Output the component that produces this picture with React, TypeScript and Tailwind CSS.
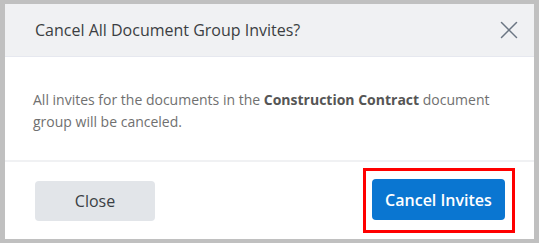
import { X } from 'lucide-react'

export default function App() {
  return (
    <div className="w-[539px] h-[243px] bg-[#c0c0c0] pt-[4px] pb-[4px] px-[5px] font-['Open_Sans',sans-serif]">
      <div className="flex flex-col h-full bg-white">
        <div className="flex items-center justify-between h-[53px] bg-[#f0f1f3] border-b border-[#e6e8ef] pl-[30px] pr-[10px]">
          <h2 className="text-[16px] text-[#3b3e42]">Cancel All Document Group Invites?</h2>
          <button className="text-[#6b7683]" aria-label="Close">
            <X className="w-[30px] h-[30px]" strokeWidth={1.2} />
          </button>
        </div>
        <div className="pt-[32px] pb-[27px] pl-[28px] pr-[40px] border-b-2 border-[#f0f1f3]">
          <p className="text-[14px] leading-[22px] text-[#707070]">
            All invites for the documents in the <span className="font-bold text-[#555]">Construction Contract</span> document group will be canceled.
          </p>
        </div>
        <div className="flex flex-1 items-center justify-between pl-[30px] pr-[19px]">
          <button className="w-[120px] h-[40px] rounded-[4px] bg-[#e2e5e9] text-[16px] text-[#3a3f44]">
            Close
          </button>
          <div className="border-[3px] border-[#ff0000] pt-[8px] pb-[10px] pl-[6px] pr-[7px]">
            <button className="w-[133px] h-[41px] rounded-[4px] bg-[#0a76d1] text-[16px] font-semibold text-white">
              Cancel Invites
            </button>
          </div>
        </div>
      </div>
    </div>
  )
}
